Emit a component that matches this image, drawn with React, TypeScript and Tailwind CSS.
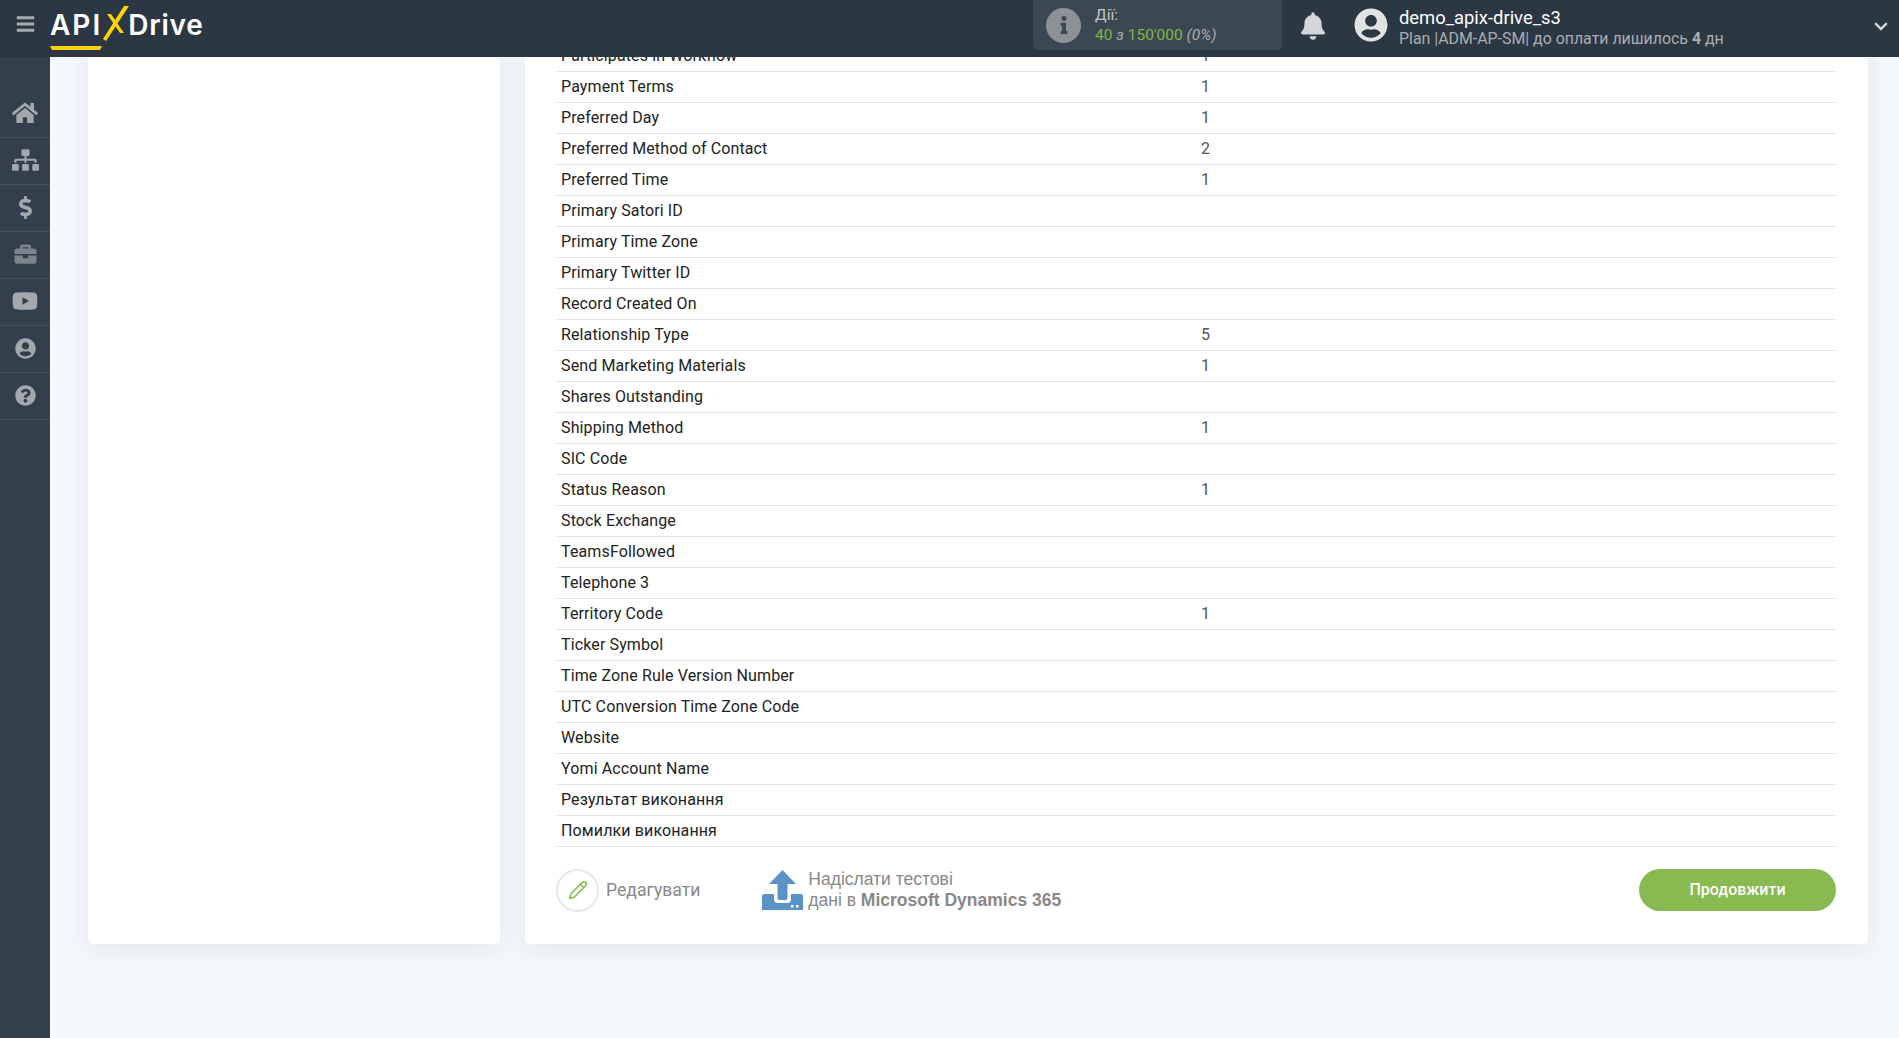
import { Pencil } from 'lucide-react';
import {
    FaBars,
    FaBell,
    FaBriefcase,
    FaChevronDown,
    FaDollarSign,
    FaHome,
    FaInfo,
    FaQuestionCircle,
    FaSitemap,
    FaUserCircle,
    FaYoutube,
} from 'react-icons/fa';

const rows: [string, string][] = [
    ['Participates in Workflow', '1'],
    ['Payment Terms', '1'],
    ['Preferred Day', '1'],
    ['Preferred Method of Contact', '2'],
    ['Preferred Time', '1'],
    ['Primary Satori ID', ''],
    ['Primary Time Zone', ''],
    ['Primary Twitter ID', ''],
    ['Record Created On', ''],
    ['Relationship Type', '5'],
    ['Send Marketing Materials', '1'],
    ['Shares Outstanding', ''],
    ['Shipping Method', '1'],
    ['SIC Code', ''],
    ['Status Reason', '1'],
    ['Stock Exchange', ''],
    ['TeamsFollowed', ''],
    ['Telephone 3', ''],
    ['Territory Code', '1'],
    ['Ticker Symbol', ''],
    ['Time Zone Rule Version Number', ''],
    ['UTC Conversion Time Zone Code', ''],
    ['Website', ''],
    ['Yomi Account Name', ''],
    ['Результат виконання', ''],
    ['Помилки виконання', ''],
];

const navItems = [
    { icon: <FaHome className="h-[24px] w-[26px]" />, tone: 'text-[#a3a8ae]' },
    { icon: <FaSitemap className="h-[22px] w-[27px]" />, tone: 'text-[#a3a8ae]' },
    { icon: <FaDollarSign className="h-[23px] w-[23px]" />, tone: 'text-[#a3a8ae]' },
    { icon: <FaBriefcase className="h-[22px] w-[23px]" />, tone: 'text-[#7b838d]' },
    { icon: <FaYoutube className="h-[24px] w-[26px]" />, tone: 'text-[#a3a8ae]' },
    { icon: <FaUserCircle className="h-[21px] w-[21px]" />, tone: 'text-[#a3a8ae]' },
    { icon: <FaQuestionCircle className="h-[21px] w-[21px]" />, tone: 'text-[#a3a8ae]' },
];

function Logo() {
    return (
        <div className="flex h-full items-center pb-[7px] font-['Inter',sans-serif] text-[28px] font-semibold text-white">
            <span className="relative tracking-[2px]">
                API
                <svg className="absolute -bottom-[5px] left-0" width="52" height="6" viewBox="0 0 52 6">
                    <polygon points="0,1 52,1 50,5 2,5" fill="#ffd400" />
                </svg>
            </span>
            <svg className="mb-[3px] -mr-[1px]" width="27" height="36" viewBox="0 0 27 36">
                <polygon points="22,0 27,0 4,35 1,33" fill="#ffd400" />
                <polygon points="5,8 9,8 22,27 18,27" fill="#ffd400" />
            </svg>
            <span className="tracking-[0.8px]">Drive</span>
        </div>
    );
}

function Header() {
    return (
        <header className="flex h-[57px] shrink-0 items-center bg-[#2c3744]">
            <div className="flex w-[50px] justify-center pb-[9px]">
                <FaBars className="h-[20px] w-[19px] text-[#a7abb0]" />
            </div>
            <Logo />
            <div className="ml-auto flex h-full items-start">
                <div className="flex h-[50px] w-[249px] items-center rounded-b-[5px] bg-[#3b4854] pl-[13px]">
                    <div className="flex h-[35px] w-[35px] items-center justify-center rounded-full bg-[#8b9197]">
                        <FaInfo className="h-[18px] w-[14px] text-[#3b4854]" />
                    </div>
                    <div className="ml-[14px] text-[15.5px] leading-[20px]">
                        <div className="text-[#c2c5c8]">Дії:</div>
                        <div className="text-[#7fb642]">
                            40 <span className="text-[#a9adb1] italic">з</span> 150'000{' '}
                            <span className="text-[#a9adb1] italic">(0%)</span>
                        </div>
                    </div>
                </div>
                <FaBell className="mt-[12px] ml-[19px] h-[28px] w-[24px] text-[#d3d5d8]" />
                <FaUserCircle className="mt-[8px] ml-[29px] h-[34px] w-[34px] text-[#e2e3e5]" />
                <div className="mt-[6px] ml-[11px] w-[474px] text-[#a9adb1]">
                    <div className="text-[18.4px] leading-[24px] text-white">demo_apix-drive_s3</div>
                    <div className="text-[15.9px] leading-[17px]">
                        Plan |ADM-AP-SM| до оплати лишилось <b className="font-bold">4</b> дн
                    </div>
                </div>
                <FaChevronDown className="mt-[19px] mr-[10px] h-[15px] w-[16px] text-[#d3d5d8]" />
            </div>
        </header>
    );
}

function Sidebar() {
    return (
        <nav className="w-[50px] shrink-0 bg-[#343f4e] pt-[34px]">
            {navItems.map((item, i) => (
                <div
                    key={i}
                    className={`flex h-[47px] items-center justify-center border-b border-[#465160] pb-[2px] ${item.tone}`}
                >
                    {item.icon}
                </div>
            ))}
        </nav>
    );
}

function UploadIcon() {
    return (
        <svg width="41" height="40" viewBox="0 0 41 40">
            <path d="M20.5 0 L34 14 L25.5 14 L25.5 28 Q25.5 30 23.5 30 L17.5 30 Q15.5 30 15.5 28 L15.5 14 L7 14 Z" fill="#5c93c6" />
            <path
                d="M2 24 L12 24 L12 29 Q12 33 16 33 L25 33 Q29 33 29 29 L29 24 L39 24 Q41 24 41 26 L41 40 L0 40 L0 26 Q0 24 2 24 Z"
                fill="#5c93c6"
            />
            <rect x="29" y="35" width="2.5" height="2.5" fill="#ffffff" />
            <rect x="34" y="35" width="2.5" height="2.5" fill="#ffffff" />
        </svg>
    );
}

function DataTable() {
    return (
        <div>
            {rows.map(([name, value]) => (
                <div
                    key={name}
                    className="flex h-[31px] items-center border-b border-[#e2e2e2] text-[16px] tracking-[0.125px]"
                >
                    <div className="w-1/2 pl-[5px] text-[#222222]">{name}</div>
                    <div className="w-1/2 pl-[5px] text-[#555555]">{value}</div>
                </div>
            ))}
        </div>
    );
}

function Actions() {
    return (
        <div className="mt-[22px] flex h-[42px] items-center">
            <div className="flex h-[43px] w-[43px] items-center justify-center rounded-full border-2 border-[#e4eae7]">
                <Pencil className="h-[20px] w-[20px] text-[#8ab94f]" strokeWidth={1.8} />
            </div>
            <span className="ml-[7px] text-[17.6px] text-[#888888]">Редагувати</span>
            <div className="ml-[62px] flex items-center">
                <UploadIcon />
                <div className="ml-[5px] font-['Liberation_Sans',sans-serif] text-[17.5px] leading-[21px] text-[#888888]">
                    <div>Надіслати тестові</div>
                    <div>
                        дані в <b className="font-bold">Microsoft Dynamics 365</b>
                    </div>
                </div>
            </div>
            <button className="ml-auto h-[42px] w-[197px] rounded-full bg-[#89b951] text-[16px] font-medium text-white">
                Продовжити
            </button>
        </div>
    );
}

export default function App() {
    return (
        <div className="flex h-screen w-full flex-col overflow-hidden bg-[#f4f7fc] font-['Roboto',sans-serif]">
            <Header />
            <div className="flex min-h-0 flex-1">
                <Sidebar />
                <main className="min-w-0 flex-1 overflow-hidden">
                    {/* page is scrolled down a bit in the screenshot */}
                    <div className="-mt-[16px] flex gap-[25px] pr-[31px] pl-[38px]">
                        <div className="w-[412px] shrink-0 rounded-[5px] bg-white shadow-[0_5px_25px_rgba(40,60,90,0.08)]" />
                        <div className="min-w-0 flex-1 rounded-[5px] bg-white pt-0 pr-[32px] pb-[33px] pl-[31px] shadow-[0_5px_25px_rgba(40,60,90,0.08)]">
                            <DataTable />
                            <Actions />
                        </div>
                    </div>
                </main>
            </div>
        </div>
    );
}
